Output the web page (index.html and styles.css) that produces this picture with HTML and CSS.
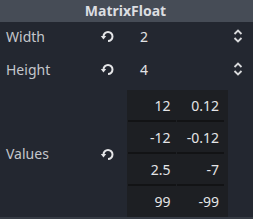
FILE: index.html
```html
<!DOCTYPE html>
<html>
<head>
<meta charset="utf-8">
<link rel="stylesheet" href="styles.css">
</head>
<body>
<div class="inspector">
  <div class="category">MatrixFloat</div>

  <div class="prop prop-spin">
    <span class="label">Width</span>
    <span class="revert"><svg viewBox="0 0 16 16" width="16" height="16"><path d="M3.5 8.5 A4.5 4.5 0 1 1 8 13" fill="none" stroke="currentColor" stroke-width="2"/><path d="M0.8 8 L6.2 8 L3.5 11.5 Z" fill="currentColor"/></svg></span>
    <div class="value">
      <span class="num">2</span>
      <svg class="spinner" viewBox="0 0 12 16" width="12" height="16"><path d="M2.5 6 L6 2.5 L9.5 6" fill="none" stroke="currentColor" stroke-width="1.8"/><path d="M2.5 10 L6 13.5 L9.5 10" fill="none" stroke="currentColor" stroke-width="1.8"/></svg>
    </div>
  </div>

  <div class="prop prop-spin second">
    <span class="label">Height</span>
    <span class="revert"><svg viewBox="0 0 16 16" width="16" height="16"><path d="M3.5 8.5 A4.5 4.5 0 1 1 8 13" fill="none" stroke="currentColor" stroke-width="2"/><path d="M0.8 8 L6.2 8 L3.5 11.5 Z" fill="currentColor"/></svg></span>
    <div class="value">
      <span class="num">4</span>
      <svg class="spinner" viewBox="0 0 12 16" width="12" height="16"><path d="M2.5 6 L6 2.5 L9.5 6" fill="none" stroke="currentColor" stroke-width="1.8"/><path d="M2.5 10 L6 13.5 L9.5 10" fill="none" stroke="currentColor" stroke-width="1.8"/></svg>
    </div>
  </div>

  <div class="prop prop-matrix">
    <span class="label">Values</span>
    <span class="revert"><svg viewBox="0 0 16 16" width="16" height="16"><path d="M3.5 8.5 A4.5 4.5 0 1 1 8 13" fill="none" stroke="currentColor" stroke-width="2"/><path d="M0.8 8 L6.2 8 L3.5 11.5 Z" fill="currentColor"/></svg></span>
    <div class="matrix">
      <div class="cell">12</div><div class="cell">0.12</div>
      <div class="cell">-12</div><div class="cell">-0.12</div>
      <div class="cell">2.5</div><div class="cell">-7</div>
      <div class="cell last">99</div><div class="cell last">-99</div>
    </div>
  </div>

  <div class="footer"></div>
</div>
</body>
</html>
```
FILE: styles.css
```css
html, body {
  margin: 0;
  padding: 0;
  background: #232730;
}
.inspector {
  width: 253px;
  height: 219px;
  font-family: "Noto Sans", "DejaVu Sans", sans-serif;
  font-size: 14px;
  color: #c3c6cb;
  display: flex;
  flex-direction: column;
  overflow: hidden;
}
.category {
  height: 22px;
  line-height: 21px;
  background: #464c56;
  color: #dcdee1;
  font-weight: bold;
  text-align: center;
  padding-right: 2px;
}
.prop {
  display: grid;
  grid-template-columns: 100px 16px 1fr;
  align-items: center;
}
.prop-spin {
  height: 28px;
}
.prop-spin.second {
  margin-top: 5px;
}
.label {
  padding-left: 6px;
}
.revert {
  display: flex;
  color: #e4e5e7;
}
.value {
  display: flex;
  align-items: center;
  justify-content: space-between;
  margin-left: 11px;
  padding-left: 13px;
  padding-right: 9px;
  color: #e2e3e5;
}
.spinner {
  color: #d9dadc;
}
.prop-matrix {
  margin-top: 7px;
}
.matrix {
  margin-left: 11px;
  width: 101px;
  box-sizing: border-box;
  background: #1d1f23;
  padding: 0 4px 0 1px;
  display: grid;
  grid-template-columns: 1fr 1fr;
  grid-template-rows: 32px 32px 32px 31px;
  column-gap: 1px;
  color: #e4e5e7;
}
.cell {
  display: flex;
  align-items: center;
  justify-content: flex-end;
  padding-right: 5px;
  border-bottom: 2px solid #121315;
  box-sizing: border-box;
}
.cell.last {
  border-bottom: none;
}
.footer {
  flex: 1;
  background: #363b44;
}
```
